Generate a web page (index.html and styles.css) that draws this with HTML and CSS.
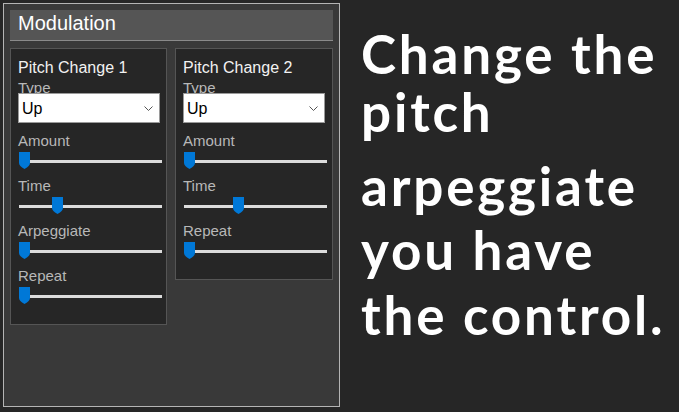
FILE: index.html
```html
<!DOCTYPE html>
<html>
<head>
<meta charset="utf-8">
<link rel="stylesheet" href="styles.css">
</head>
<body>
<div class="page">
  <section class="panel">
    <div class="panel-header">Modulation</div>
    <div class="groups">
      <div class="group">
        <div class="group-title">Pitch Change 1</div>
        <div class="label">Type</div>
        <div class="select"><span>Up</span>
          <svg class="chev" width="9" height="5" viewBox="0 0 9 5"><path d="M0.5 0.5 L4.5 4.5 L8.5 0.5" fill="none" stroke="#555" stroke-width="1"/></svg>
        </div>
        <div class="label">Amount</div>
        <div class="slider"><div class="track"></div><svg class="thumb" style="--v:0" width="11" height="17" viewBox="0 0 11 17"><path d="M0 0 H11 V11 Q11 14 5.5 17 Q0 14 0 11 Z" fill="#0078d7"/></svg></div>
        <div class="label">Time</div>
        <div class="slider"><div class="track"></div><svg class="thumb" style="--v:0.25" width="11" height="17" viewBox="0 0 11 17"><path d="M0 0 H11 V11 Q11 14 5.5 17 Q0 14 0 11 Z" fill="#0078d7"/></svg></div>
        <div class="label">Arpeggiate</div>
        <div class="slider"><div class="track"></div><svg class="thumb" style="--v:0" width="11" height="17" viewBox="0 0 11 17"><path d="M0 0 H11 V11 Q11 14 5.5 17 Q0 14 0 11 Z" fill="#0078d7"/></svg></div>
        <div class="label">Repeat</div>
        <div class="slider"><div class="track"></div><svg class="thumb" style="--v:0" width="11" height="17" viewBox="0 0 11 17"><path d="M0 0 H11 V11 Q11 14 5.5 17 Q0 14 0 11 Z" fill="#0078d7"/></svg></div>
      </div>
      <div class="group">
        <div class="group-title">Pitch Change 2</div>
        <div class="label">Type</div>
        <div class="select"><span>Up</span>
          <svg class="chev" width="9" height="5" viewBox="0 0 9 5"><path d="M0.5 0.5 L4.5 4.5 L8.5 0.5" fill="none" stroke="#555" stroke-width="1"/></svg>
        </div>
        <div class="label">Amount</div>
        <div class="slider"><div class="track"></div><svg class="thumb" style="--v:0" width="11" height="17" viewBox="0 0 11 17"><path d="M0 0 H11 V11 Q11 14 5.5 17 Q0 14 0 11 Z" fill="#0078d7"/></svg></div>
        <div class="label">Time</div>
        <div class="slider"><div class="track"></div><svg class="thumb" style="--v:0.37" width="11" height="17" viewBox="0 0 11 17"><path d="M0 0 H11 V11 Q11 14 5.5 17 Q0 14 0 11 Z" fill="#0078d7"/></svg></div>
        <div class="label">Repeat</div>
        <div class="slider"><div class="track"></div><svg class="thumb" style="--v:0" width="11" height="17" viewBox="0 0 11 17"><path d="M0 0 H11 V11 Q11 14 5.5 17 Q0 14 0 11 Z" fill="#0078d7"/></svg></div>
      </div>
    </div>
  </section>
  <div class="promo">
    <p class="p1">Change the<br>pitch</p>
    <p class="p2">arpeggiate</p>
    <p class="p3">you have<br>the control.</p>
  </div>
</div>
</body>
</html>
```

FILE: styles.css
```css
html, body {
  margin: 0;
  padding: 0;
  background: #262626;
}
body {
  font-family: "Liberation Sans", Arial, sans-serif;
  width: 679px;
  height: 412px;
  overflow: hidden;
}
.page {
  display: flex;
  align-items: flex-start;
  padding: 3px;
}
.panel {
  box-sizing: border-box;
  width: 337px;
  height: 404px;
  border: 1px solid #b4b4b4;
  background: #393939;
  padding: 6px;
}
.panel-header {
  height: 31px;
  box-sizing: border-box;
  background: #555555;
  border-bottom: 1px solid #8a8a8a;
  color: #ffffff;
  font-size: 20px;
  line-height: 23px;
  padding: 2px 8px 0;
}
.groups {
  display: flex;
  gap: 8px;
  margin-top: 7px;
  align-items: flex-start;
}
.group {
  box-sizing: border-box;
  width: 157px;
  background: #262626;
  border: 1px solid #555555;
  padding: 10px 7px 16px;
}
.group + .group {
  width: 158px;
}
.group-title {
  color: #f2f2f2;
  font-size: 16px;
  line-height: 18px;
}
.label {
  color: #b8b8b8;
  font-size: 15px;
  line-height: 17px;
  margin-top: 2px;
}
.select {
  position: relative;
  box-sizing: border-box;
  height: 30px;
  width: 142px;
  margin-top: -3px;
  background: #ffffff;
  border: 1px solid #9a9a9a;
  display: flex;
  align-items: center;
  justify-content: space-between;
  padding: 0 6px 0 3px;
  color: #000;
  font-size: 16px;
}
.select span {
  padding-top: 1px;
}
.select + .label {
  margin-top: 9px;
}
.slider {
  position: relative;
  height: 24px;
  width: 143px;
  margin-left: 1px;
  margin-bottom: 4px;
}
.slider:last-child {
  margin-bottom: 0;
}
.track {
  position: absolute;
  left: 0;
  right: 0;
  top: 11px;
  height: 3px;
  background: #dcdcdc;
}
.thumb {
  position: absolute;
  top: 3px;
  left: calc((100% - 11px) * var(--v));
}
.promo {
  margin-left: 21px;
  color: #ffffff;
  font-family: Lato, "Open Sans", sans-serif;
  font-weight: 700;
  font-size: 53px;
  letter-spacing: 2.8px;
}
.promo p {
  margin: 0;
}
.p1 {
  line-height: 58px;
  margin-top: 22px !important;
}
.p2 {
  line-height: 58px;
  margin-top: 16px !important;
}
.p3 {
  line-height: 65px;
  margin-top: 2px !important;
}
```
